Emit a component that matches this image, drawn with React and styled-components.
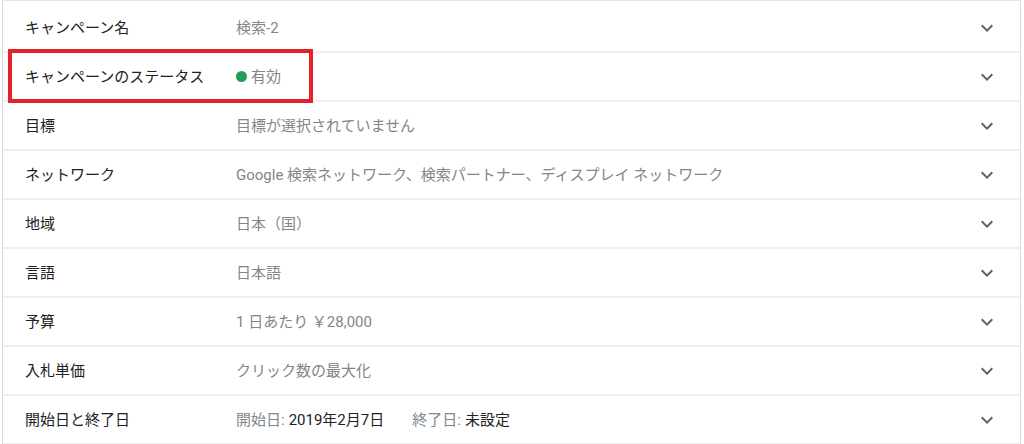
import React from "react";
import styled, { createGlobalStyle } from "styled-components";

const GlobalStyle = createGlobalStyle`
  html, body {
    margin: 0;
    padding: 0;
    background: #ffffff;
  }
  body {
    font-family: Roboto, "Noto Sans CJK JP", sans-serif;
    -webkit-font-smoothing: antialiased;
  }
`;

const Page = styled.div`
  position: relative;
  width: 1024px;
  height: 444px;
  overflow: hidden;
  background: #ffffff;
`;

const Panel = styled.div`
  margin-left: 2px;
  width: 1019px;
  padding-top: 3px;
  border-top: 1px solid #e4e4e4;
  border-left: 1px solid #dadada;
  border-right: 1px solid #dadada;
  box-sizing: border-box;
`;

const Row = styled.div`
  display: flex;
  align-items: center;
  height: 49px;
  box-sizing: border-box;
  border-bottom: 2px solid #efefef;
  padding: 0 21px 0 22px;
  font-size: 15px;
  line-height: 20px;
`;

const Label = styled.div`
  width: 211px;
  flex: none;
  color: #202124;
`;

const Value = styled.div`
  flex: 1;
  display: flex;
  align-items: center;
  color: #80868b;
`;

const Strong = styled.span`
  color: #202124;
  margin-left: 4px;
`;

const Gap = styled.span`
  display: inline-block;
  width: 28px;
`;

const Dot = styled.span`
  width: 11px;
  height: 11px;
  border-radius: 50%;
  background: #1e9e5a;
  margin-right: 4px;
  display: inline-block;
`;

const Chevron = styled.svg`
  width: 24px;
  height: 24px;
  flex: none;
  fill: #5f6368;
`;

const Highlight = styled.div`
  position: absolute;
  left: 8px;
  top: 49px;
  width: 305px;
  height: 54px;
  box-sizing: border-box;
  border: 4px solid #e8202a;
  pointer-events: none;
`;

const ExpandIcon = () => (
  <Chevron viewBox="0 0 24 24">
    <path d="M16.59 8.59L12 13.17 7.41 8.59 6 10l6 6 6-6z" />
  </Chevron>
);

const rows = [
  { label: "キャンペーン名", value: "検索-2" },
  {
    label: "キャンペーンのステータス",
    value: (
      <>
        <Dot />
        有効
      </>
    ),
  },
  { label: "目標", value: "目標が選択されていません" },
  {
    label: "ネットワーク",
    value: "Google 検索ネットワーク、検索パートナー、ディスプレイ ネットワーク",
  },
  { label: "地域", value: "日本（国）" },
  { label: "言語", value: "日本語" },
  { label: "予算", value: "1 日あたり ￥28,000" },
  { label: "入札単価", value: "クリック数の最大化" },
  {
    label: "開始日と終了日",
    value: (
      <>
        開始日:<Strong>2019年2月7日</Strong>
        <Gap />
        終了日:<Strong>未設定</Strong>
      </>
    ),
  },
];

export default function App() {
  return (
    <Page>
      <GlobalStyle />
      <Panel>
        {rows.map((row) => (
          <Row key={row.label}>
            <Label>{row.label}</Label>
            <Value>{row.value}</Value>
            <ExpandIcon />
          </Row>
        ))}
      </Panel>
      <Highlight />
    </Page>
  );
}
